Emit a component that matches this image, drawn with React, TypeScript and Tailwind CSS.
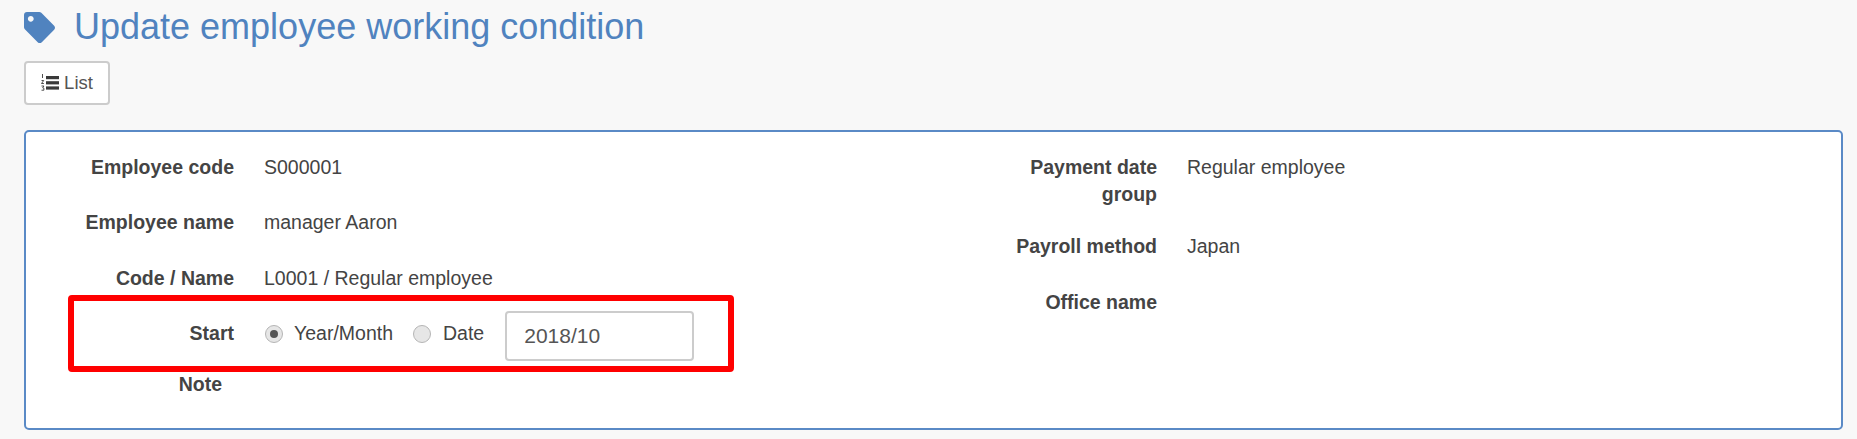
import React from "react";
import { FaTag } from "react-icons/fa";

function Row({ label, children, className = "" }: { label: React.ReactNode; children?: React.ReactNode; className?: string }) {
  return (
    <div className={`flex gap-[30px] leading-[27px] ${className}`}>
      <div className="w-[208px] shrink-0 text-right font-bold">{label}</div>
      <div className="flex-1">{children}</div>
    </div>
  );
}

function Radio({ checked }: { checked?: boolean }) {
  return (
    <span className="flex size-[18px] items-center justify-center rounded-full border border-[#b5b5b5] bg-[#e6e6e6]">
      {checked && <span className="size-[8px] rounded-full bg-[#555555]" />}
    </span>
  );
}

function ListOlIcon() {
  return (
    <svg width="18" height="18" viewBox="0 0 18 18" className="shrink-0" aria-hidden="true">
      <rect x="5" y="2" width="13" height="3.2" fill="#3a3a3a" />
      <rect x="5" y="7.2" width="13" height="3.2" fill="#3a3a3a" />
      <rect x="5" y="12.4" width="13" height="3.2" fill="#3a3a3a" />
      <path
        d="M1.5 0v4M0.5 6.5h2.2l-2.2 3h2.4M0.5 12h2.4l-1.2 1.8 1.2 0.4v2h-2.4"
        fill="none"
        stroke="#3a3a3a"
        strokeWidth="0.9"
      />
    </svg>
  );
}

export default function App() {
  return (
    <div className="h-[439px] overflow-hidden bg-[#f8f8f8] pl-[24px] pr-[12px] text-[19.5px] text-[#444444] [font-family:'Liberation_Sans',Arial,sans-serif]">
      <div className="flex h-[54px] items-center gap-[19px] text-[#5083bf]">
        <FaTag className="size-[31px]" />
        <h1 className="text-[36px] leading-[54px] font-normal">Update employee working condition</h1>
      </div>
      <button className="mt-[7px] flex h-[44px] w-[86px] items-center justify-center gap-[5px] rounded-[4px] border-2 border-[#cccccc] bg-white text-[18.5px] text-[#555555]">
        <ListOlIcon />
        List
      </button>
      <div className="mt-[25px] mr-[2px] grid h-[300px] grid-cols-[923px_1fr] rounded-[5px] border-2 border-[#5a8ac6] bg-white pt-[22px]">
        <div>
          <Row label="Employee code" className="mb-[28px]">S000001</Row>
          <Row label="Employee name" className="mb-[29px]">manager Aaron</Row>
          <Row label="Code / Name" className="mb-[28px]">L0001 / Regular employee</Row>
          <Row label="Start" className="relative mb-[24px]">
            <div className="flex items-center">
              <span className="ml-[1px]"><Radio checked /></span>
              <span className="ml-[11px]">Year/Month</span>
              <span className="ml-[20px]"><Radio /></span>
              <span className="ml-[12px]">Date</span>
              <div className="-mt-[10px] -mb-[14px] ml-[21px] flex h-[50px] w-[189px] items-center rounded-[4px] border-2 border-[#cccccc] bg-white px-[17px] text-[21px] text-[#555555]">2018/10</div>
            </div>
            <div className="absolute left-[42px] top-[-25px] h-[77px] w-[666px] rounded-[4px] border-[6px] border-[#ff0000]" />
          </Row>
          <Row label={<span className="pr-[12px]">Note</span>} />
        </div>
        <div>
          <Row label={<>Payment date<br />group</>} className="mb-[25px]">Regular employee</Row>
          <Row label="Payroll method" className="mb-[29px]">Japan</Row>
          <Row label="Office name" />
        </div>
      </div>
    </div>
  );
}
